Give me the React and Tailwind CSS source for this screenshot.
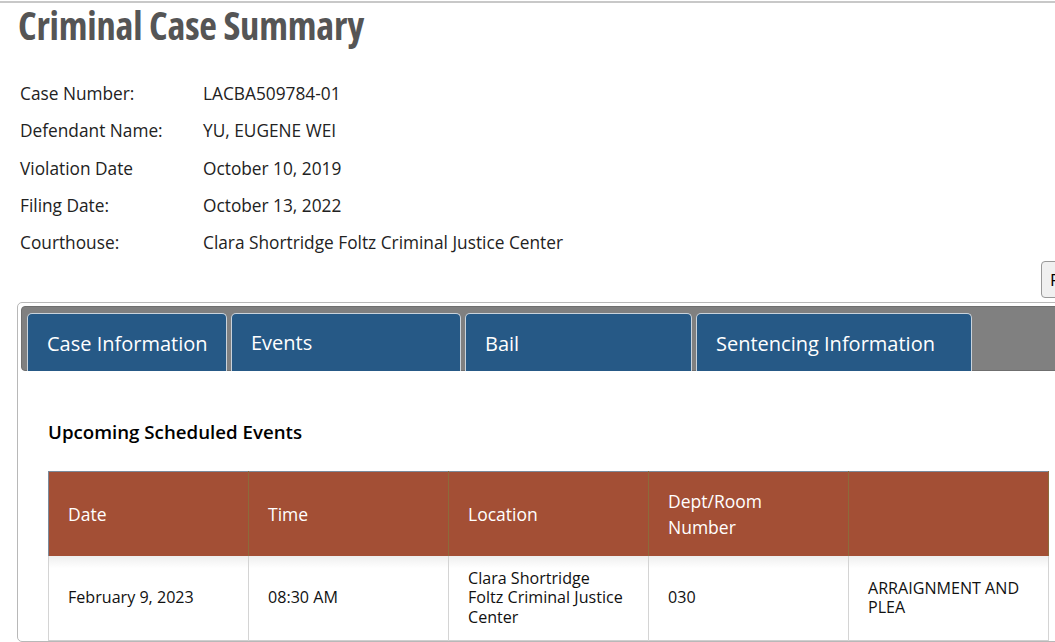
import React from 'react'

const fields = [
  ['Case Number:', 'LACBA509784-01'],
  ['Defendant Name:', 'YU, EUGENE WEI'],
  ['Violation Date', 'October 10, 2019'],
  ['Filing Date:', 'October 13, 2022'],
  ['Courthouse:', 'Clara Shortridge Foltz Criminal Justice Center'],
]

const tabs = [
  { label: 'Case Information', w: 'w-[200px]' },
  { label: 'Events', w: 'w-[230px]', active: true },
  { label: 'Bail', w: 'w-[227px]' },
  { label: 'Sentencing Information', w: 'w-[276px]' },
]

const headers = ['Date', 'Time', 'Location', 'Dept/Room Number', '']

export default function App() {
  return (
    <div className="w-[1055px] h-[642px] overflow-hidden bg-white text-[#222] font-['Open_Sans',sans-serif]">
      <div className="border-t-2 border-[#c8c8c8] mt-[1px]">
        <h1 className="pl-[18px] text-[38.5px] leading-[44px] font-bold font-stretch-condensed text-[#555] tracking-[-0.2px]">
          Criminal Case Summary
        </h1>

        {/* summary fields */}
        <div className="pl-[20px] pt-[36px] text-[17.3px] leading-[22px]">
          {fields.map(([k, v]) => (
            <div key={k} className="flex h-[37.3px]">
              <div className="w-[183px]">{k}</div>
              <div>{v}</div>
            </div>
          ))}
        </div>

        <div className="flex justify-end h-[41px] -mt-[8px]">
          <button className="h-[37px] w-[30px] -mr-[16px] border border-[#999] rounded-[4px] bg-[#f0f0f0] text-[17px] text-left pl-[8px] text-black">
            Print
          </button>
        </div>

        {/* tab panel */}
        <div className="ml-[17px] w-[1060px] border border-[#b8b8b8] rounded-[5px] p-[3px] pb-0">
          <div className="flex gap-[4px] bg-[#808080] border border-[#6f6f6f] rounded-[4px] pl-[5px] pt-[6px] h-[65px]">
            {tabs.map((t) => (
              <div
                key={t.label}
                className={`${t.w} h-[58px] bg-[#265986] border border-b-0 border-[#c9d3dc] rounded-t-[5px] text-white text-[20px] pl-[19px] ${t.active ? 'pt-[14px]' : 'pt-[15px]'}`}
              >
                {t.label}
              </div>
            ))}
          </div>

          <div className="pl-[27px] pt-[48px]">
            <h2 className="text-[18.7px] leading-[26px] font-semibold text-black">Upcoming Scheduled Events</h2>

            <table className="mt-[26px] border-collapse table-fixed w-[1001px]">
              <thead>
                <tr className="bg-[#a34f35] h-[84px] border-t border-[#7b8a9a]">
                  {headers.map((h, i) => (
                    <th
                      key={i}
                      className="w-[200px] text-left align-middle font-normal text-white text-[17.5px] leading-[26px] pl-[19px] pr-[40px] border-r border-[#8d6a3a] first:border-l first:border-l-[#7b8a9a]"
                    >
                      {h}
                    </th>
                  ))}
                </tr>
              </thead>
              <tbody>
                <tr className="h-[85px] text-[16.1px] leading-[19.5px] text-[#111] border-b border-[#cfcfcf] bg-[linear-gradient(#eee,#fff_12px)]">
                  <td className="pl-[19px] border-x border-[#d4d4d4]">February 9, 2023</td>
                  <td className="pl-[19px] border-r border-[#d4d4d4]">08:30 AM</td>
                  <td className="pl-[19px] pr-[20px] border-r border-[#d4d4d4]">Clara Shortridge Foltz Criminal Justice Center</td>
                  <td className="pl-[19px] border-r border-[#d4d4d4]">030</td>
                  <td className="pl-[19px] pr-[20px] border-r border-[#d4d4d4]">ARRAIGNMENT AND PLEA</td>
                </tr>
              </tbody>
            </table>
          </div>
        </div>
      </div>
    </div>
  )
}
